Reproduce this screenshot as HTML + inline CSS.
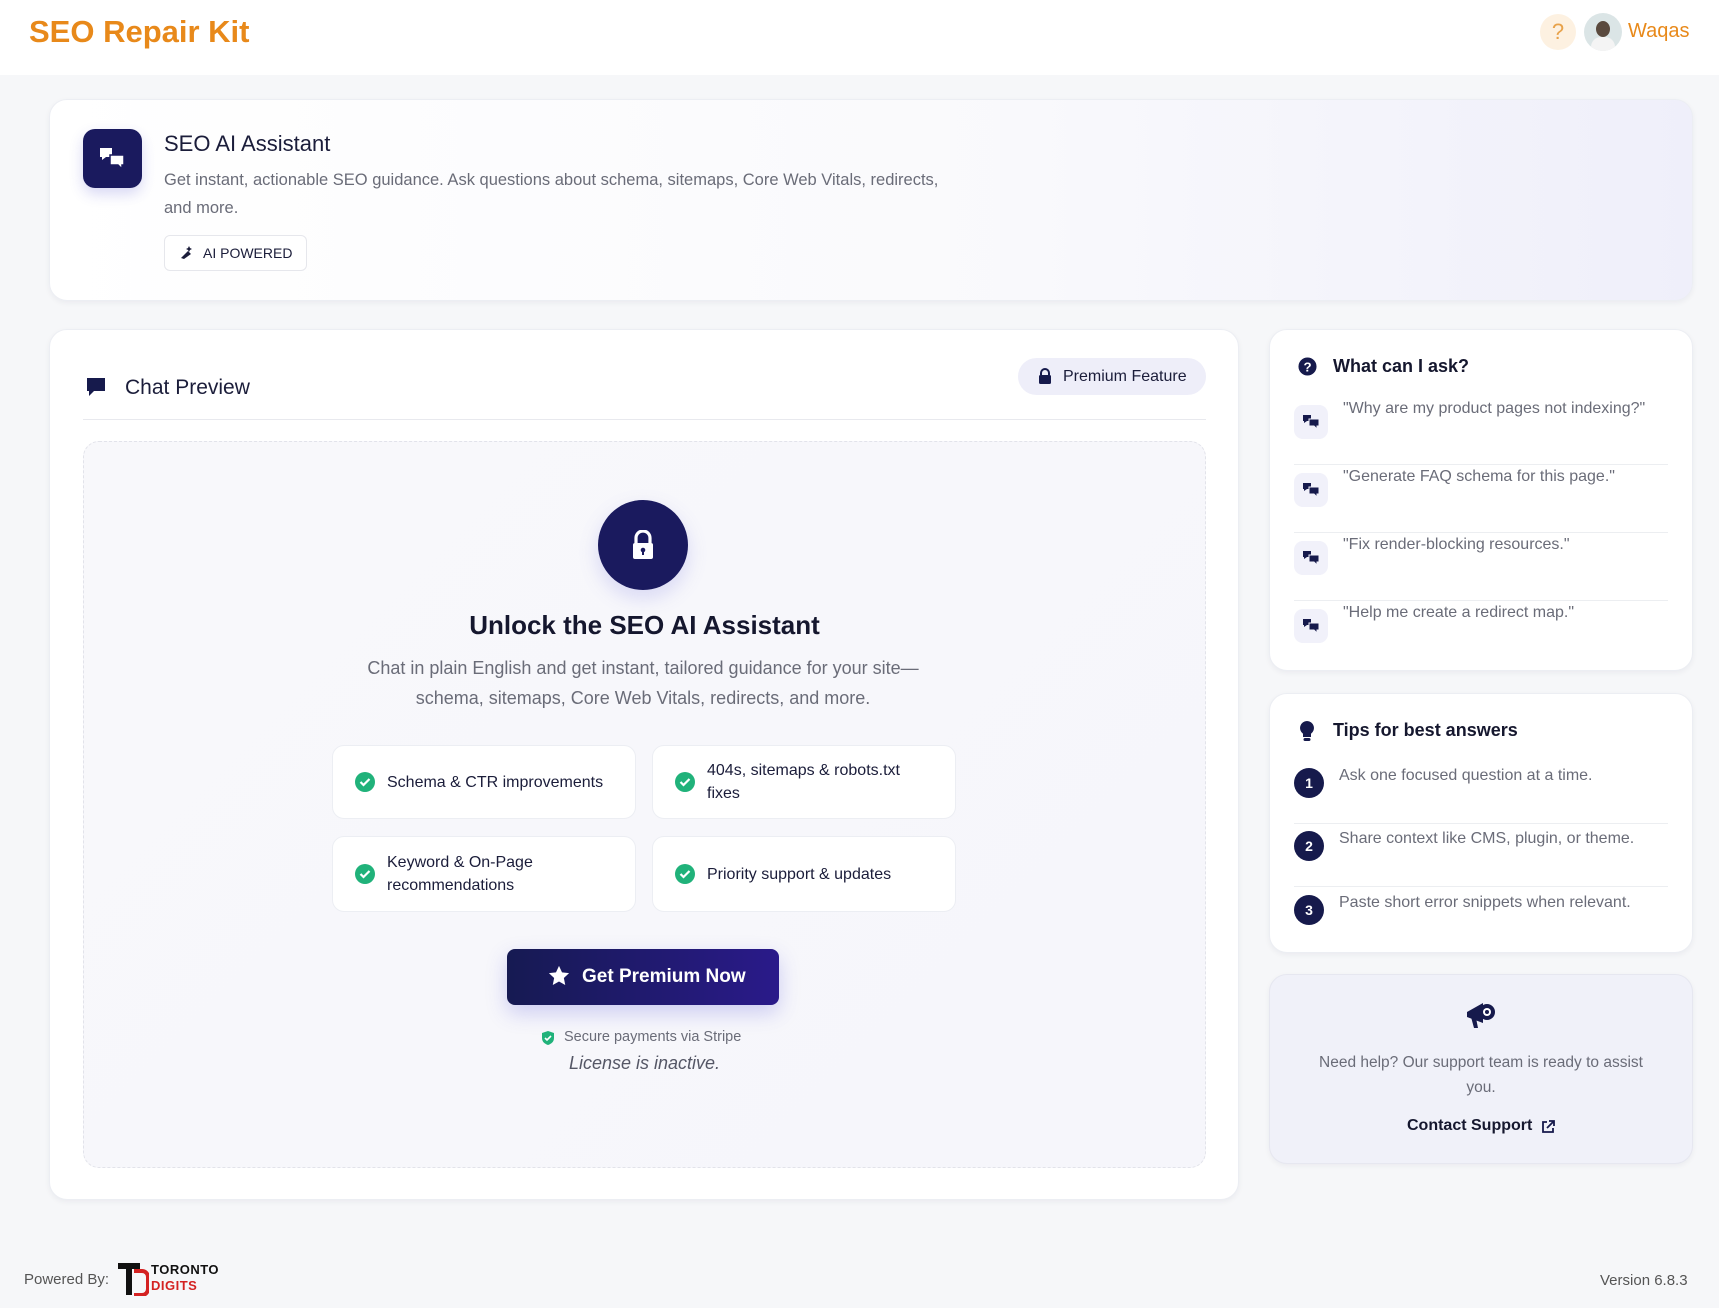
<!DOCTYPE html>
<html><head><meta charset="utf-8"><style>
*{box-sizing:border-box;margin:0;padding:0}
body{width:1719px;height:1308px;background:#f6f7f9;font-family:"Liberation Sans",sans-serif;color:#1b1d3a;position:relative;overflow:hidden}
.abs{position:absolute}
.card{position:absolute;background:#fff;border:1px solid #eceef3;border-radius:18px;box-shadow:0 2px 6px rgba(20,20,60,.05)}
.navy{background:#1a1a5e}
.feat{position:absolute;background:#fff;border:1px solid #eceef3;border-radius:12px;display:flex;align-items:center;padding-left:22px;font-size:16px;color:#1b1d3a;line-height:23px}
.feat .ck{width:20px;height:20px;border-radius:50%;background:#20b27a;margin-right:12px;flex:none;display:flex;align-items:center;justify-content:center}
.q{position:absolute;left:24px;right:24px;height:68px;border-bottom:1px solid #eceef1}
.q .ic{position:absolute;left:0;top:8px;width:34px;height:34px;border-radius:9px;background:#f1f1fa;display:flex;align-items:center;justify-content:center}
.q .t{position:absolute;left:49px;top:3px;font-size:16px;color:#6a6c78}
.tip{position:absolute;left:24px;right:24px;height:63px;border-bottom:1px solid #eceef1}
.tip .n{position:absolute;left:0;top:7px;width:30px;height:30px;border-radius:50%;background:#161a4c;color:#fff;font-size:14px;font-weight:bold;display:flex;align-items:center;justify-content:center}
.tip .t{position:absolute;left:45px;top:6px;font-size:16px;color:#6a6c78}
</style></head><body>
<div class="abs" style="left:0;top:0;width:1719px;height:75px;background:#fff"></div>
<div class="abs" style="left:29px;top:14px;font-size:31px;font-weight:bold;color:#e8891a">SEO Repair Kit</div>
<div class="abs" style="left:1540px;top:14px;width:36px;height:36px;border-radius:50%;background:#fdf1e1;color:#e8a24a;font-size:22px;text-align:center;line-height:36px">?</div>
<div class="abs" style="left:1584px;top:13px;width:38px;height:38px;border-radius:50%;background:#dbe5e6;overflow:hidden"><div style="margin:8px auto 0;width:14px;height:16px;border-radius:50%;background:#5a4a3e"></div><div style="margin:0 auto;width:24px;height:14px;border-radius:10px 10px 0 0;background:#f4f4f4"></div></div>
<div class="abs" style="left:1628px;top:20px;font-size:20px;color:#e8891a">Waqas</div>

<div class="card" style="left:49px;top:99px;width:1644px;height:202px;background:linear-gradient(90deg,#fff 0%,#f9f9fc 60%,#efeffa 100%)"></div>
<div class="abs navy" style="left:83px;top:129px;width:59px;height:59px;border-radius:12px;box-shadow:0 6px 14px rgba(60,60,200,.2);display:flex;align-items:center;justify-content:center"><svg width="30" height="26" viewBox="0 0 30 26"><path d="M2 2h12v9H8l-4 3v-3H2z" fill="#fff"/><path d="M12 9h14v10h-2v4l-4-4h-8z" fill="#fff" stroke="#1a1a5e" stroke-width="1.5"/></svg></div>
<div class="abs" style="left:164px;top:131px;font-size:22px">SEO AI Assistant</div>
<div class="abs" style="left:164px;top:166px;width:800px;font-size:16.5px;line-height:28px;color:#6a6c78">Get instant, actionable SEO guidance. Ask questions about schema, sitemaps, Core Web Vitals, redirects, and more.</div>
<div class="abs" style="left:164px;top:235px;width:143px;height:36px;border:1px solid #e6e7ec;border-radius:6px;background:#fff;font-size:14px;line-height:34px;padding-left:38px">AI POWERED</div>
<svg class="abs" style="left:179px;top:244px" width="16" height="16" viewBox="0 0 16 16"><path d="M2 14l7-7 3 3-7 5zM10 2l1 2 2 1-2 1-1 2-1-2-2-1 2-1z" fill="#1b1d3a"/></svg>

<div class="card" style="left:49px;top:329px;width:1190px;height:871px"></div>
<svg class="abs" style="left:86px;top:377px" width="20" height="20" viewBox="0 0 20 20"><path d="M1 1h18v13H8l-5 5v-5H1z" fill="#161a4c"/></svg>
<div class="abs" style="left:125px;top:376px;font-size:21px">Chat Preview</div>
<div class="abs" style="left:1018px;top:358px;width:188px;height:37px;border-radius:19px;background:#eeeef9;font-size:16px;line-height:37px;padding-left:45px">Premium Feature</div>
<svg class="abs" style="left:1038px;top:368px" width="14" height="17" viewBox="0 0 14 17"><path d="M3 7V5a4 4 0 018 0v2" fill="none" stroke="#161a4c" stroke-width="2"/><rect x="1" y="7" width="12" height="9" rx="1.5" fill="#161a4c"/></svg>
<div class="abs" style="left:83px;top:419px;width:1123px;height:1px;background:#e8e9ee"></div>
<div class="abs" style="left:83px;top:441px;width:1123px;height:727px;border:1px dashed #e2e3ea;border-radius:16px;background:linear-gradient(135deg,#f8f8fb,#f6f6fb)"></div>
<div class="abs navy" style="left:598px;top:500px;width:90px;height:90px;border-radius:50%;box-shadow:0 8px 20px rgba(90,90,220,.2)"></div>
<svg class="abs" style="left:631px;top:530px" width="24" height="30" viewBox="0 0 24 30"><path d="M5 13V8a7 7 0 0114 0v5" fill="none" stroke="#fff" stroke-width="3.2"/><rect x="2" y="13" width="20" height="16" rx="2" fill="#fff"/><circle cx="12" cy="20" r="2.3" fill="#1a1a5e"/><rect x="11" y="20" width="2" height="5" fill="#1a1a5e"/></svg>
<div class="abs" style="left:83px;width:1123px;top:610px;text-align:center;font-size:26px;font-weight:bold;color:#15172e">Unlock the SEO AI Assistant</div>
<div class="abs" style="left:340px;width:606px;top:653px;text-align:center;font-size:18px;line-height:30px;color:#6a6c78">Chat in plain English and get instant, tailored guidance for your site—schema, sitemaps, Core Web Vitals, redirects, and more.</div>
<div class="feat" style="left:332px;top:745px;width:304px;height:74px"><span class="ck"><svg width="12" height="10" viewBox="0 0 12 10"><path d="M1.5 5l3 3 6-6" fill="none" stroke="#fff" stroke-width="2.2"/></svg></span>Schema &amp; CTR improvements</div>
<div class="feat" style="left:652px;top:745px;width:304px;height:74px"><span class="ck"><svg width="12" height="10" viewBox="0 0 12 10"><path d="M1.5 5l3 3 6-6" fill="none" stroke="#fff" stroke-width="2.2"/></svg></span>404s, sitemaps &amp; robots.txt<br>fixes</div>
<div class="feat" style="left:332px;top:836px;width:304px;height:76px"><span class="ck"><svg width="12" height="10" viewBox="0 0 12 10"><path d="M1.5 5l3 3 6-6" fill="none" stroke="#fff" stroke-width="2.2"/></svg></span>Keyword &amp; On-Page<br>recommendations</div>
<div class="feat" style="left:652px;top:836px;width:304px;height:76px"><span class="ck"><svg width="12" height="10" viewBox="0 0 12 10"><path d="M1.5 5l3 3 6-6" fill="none" stroke="#fff" stroke-width="2.2"/></svg></span>Priority support &amp; updates</div>
<div class="abs" style="left:507px;top:949px;width:272px;height:56px;border-radius:8px;background:linear-gradient(90deg,#161a52,#2a1a8a);box-shadow:0 8px 20px rgba(80,80,220,.25);color:#fff;font-size:19px;font-weight:bold;line-height:56px;padding-left:75px">Get Premium Now</div>
<svg class="abs" style="left:548px;top:965px" width="22" height="22" viewBox="0 0 24 24"><path d="M12 1l3.3 7 7.7.9-5.7 5.3 1.5 7.6L12 18l-6.8 3.8 1.5-7.6L1 8.9 8.7 8z" fill="#fff"/></svg>
<svg class="abs" style="left:541px;top:1030px" width="14" height="16" viewBox="0 0 14 16"><path d="M7 1l6 2v5c0 4-3 6-6 7-3-1-6-3-6-7V3z" fill="#20b27a"/><path d="M4 8l2 2 4-4" stroke="#fff" stroke-width="1.6" fill="none"/></svg>
<div class="abs" style="left:564px;top:1029px;font-size:14.5px;color:#6a6c78">Secure payments via Stripe</div>
<div class="abs" style="left:83px;width:1123px;top:1053px;text-align:center;font-size:18px;font-style:italic;color:#555766">License is inactive.</div>

<div class="card" style="left:1269px;top:329px;width:424px;height:342px">
<svg class="abs" style="left:28px;top:27px" width="19" height="19" viewBox="0 0 20 20"><circle cx="10" cy="10" r="9.5" fill="#161a4c"/><text x="10" y="15" font-size="14" font-weight="bold" fill="#fff" text-anchor="middle" font-family="Liberation Sans">?</text></svg>
<div class="abs" style="left:63px;top:26px;font-size:18px;font-weight:bold;color:#15172e">What can I ask?</div>
<div class="q" style="top:67px"><div class="ic"><svg width="18" height="16" viewBox="0 0 18 16"><path d="M1 1h8v6H5l-3 2V7H1z" fill="#161a4c"/><path d="M7 5h10v7h-2v3l-3-3H7z" fill="#161a4c" stroke="#f1f1fa"/></svg></div><div class="t">"Why are my product pages not indexing?"</div></div>
<div class="q" style="top:135px"><div class="ic"><svg width="18" height="16" viewBox="0 0 18 16"><path d="M1 1h8v6H5l-3 2V7H1z" fill="#161a4c"/><path d="M7 5h10v7h-2v3l-3-3H7z" fill="#161a4c" stroke="#f1f1fa"/></svg></div><div class="t">"Generate FAQ schema for this page."</div></div>
<div class="q" style="top:203px"><div class="ic"><svg width="18" height="16" viewBox="0 0 18 16"><path d="M1 1h8v6H5l-3 2V7H1z" fill="#161a4c"/><path d="M7 5h10v7h-2v3l-3-3H7z" fill="#161a4c" stroke="#f1f1fa"/></svg></div><div class="t">"Fix render-blocking resources."</div></div>
<div class="q" style="top:271px;border:none"><div class="ic"><svg width="18" height="16" viewBox="0 0 18 16"><path d="M1 1h8v6H5l-3 2V7H1z" fill="#161a4c"/><path d="M7 5h10v7h-2v3l-3-3H7z" fill="#161a4c" stroke="#f1f1fa"/></svg></div><div class="t">"Help me create a redirect map."</div></div>
</div>

<div class="card" style="left:1269px;top:693px;width:424px;height:260px">
<svg class="abs" style="left:29px;top:26px" width="16" height="22" viewBox="0 0 16 22"><path d="M8 1a7 7 0 00-4 12.7V17h8v-3.3A7 7 0 008 1z" fill="#161a4c"/><rect x="4.5" y="18" width="7" height="3" rx="1.5" fill="#161a4c"/></svg>
<div class="abs" style="left:63px;top:26px;font-size:18px;font-weight:bold;color:#15172e">Tips for best answers</div>
<div class="tip" style="top:67px"><div class="n">1</div><div class="t">Ask one focused question at a time.</div></div>
<div class="tip" style="top:130px"><div class="n">2</div><div class="t">Share context like CMS, plugin, or theme.</div></div>
<div class="tip" style="top:194px;border:none"><div class="n">3</div><div class="t">Paste short error snippets when relevant.</div></div>
</div>

<div class="card" style="left:1269px;top:974px;width:424px;height:190px;background:#f0f1f9;border-color:#e6e7f0">
<svg class="abs" style="left:195px;top:25px" width="32" height="30" viewBox="0 0 32 30"><path d="M2 12l16-9v20L2 17z" fill="#161a4c"/><circle cx="22" cy="12" r="8" fill="#161a4c"/><circle cx="22" cy="12" r="4" fill="#fff"/><circle cx="22" cy="12" r="2" fill="#161a4c"/><path d="M6 17l3 11h4l-2-10z" fill="#161a4c"/></svg>
<div class="abs" style="left:40px;right:40px;top:75px;text-align:center;font-size:15.5px;line-height:25px;color:#6a6c78">Need help? Our support team is ready to assist you.</div>
<div class="abs" style="left:137px;top:142px;font-size:16px;font-weight:bold;color:#15172e">Contact Support</div>
<svg class="abs" style="left:271px;top:145px" width="14" height="14" viewBox="0 0 14 14"><path d="M6 2H2v10h10V8" fill="none" stroke="#161a4c" stroke-width="1.8"/><path d="M8 1h5v5M13 1L6 8" fill="none" stroke="#161a4c" stroke-width="1.8"/></svg>
</div>

<div class="abs" style="left:24px;top:1271px;font-size:15px;color:#555">Powered By:</div>
<svg class="abs" style="left:117px;top:1262px" width="32" height="34" viewBox="0 0 32 34"><path d="M1 1h22v6H15v26H9V7H1z" fill="#111"/><path d="M17 9h8a6 6 0 016 6v12a6 6 0 01-6 6h-8" fill="none" stroke="#d42222" stroke-width="4"/></svg>
<div class="abs" style="left:151px;top:1262px;font-size:13px;font-weight:bold;line-height:16px;letter-spacing:0.5px;color:#111">TORONTO<br><span style="color:#d42222">DIGITS</span></div>
<div class="abs" style="left:1600px;top:1272px;font-size:15px;color:#555">Version 6.8.3</div>
</body></html>
